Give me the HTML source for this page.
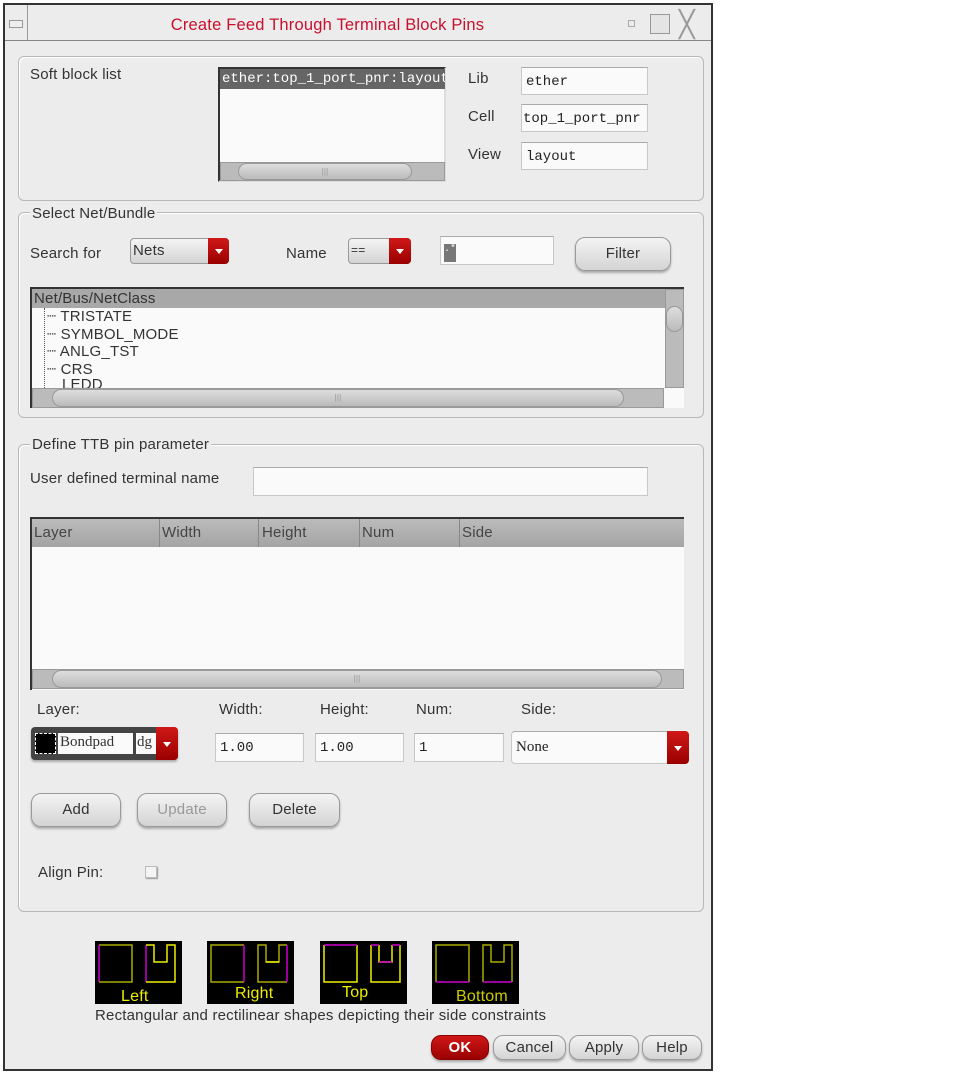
<!DOCTYPE html>
<html><head><meta charset="utf-8"><style>
*{box-sizing:border-box;margin:0;padding:0}
body{width:965px;height:1073px;background:#fff;position:relative;overflow:hidden;font-family:"Liberation Sans",sans-serif;font-size:15px;letter-spacing:0.2px;color:#333}
.a{position:absolute}
.win{left:3px;top:3px;width:710px;height:1068px;background:#ececec;border:2px solid #333}
.grp{border:1px solid #b8b8b8;border-radius:6px;box-shadow:1px 1px 0 #fff inset}
.lt{background:#ececec;padding:0 2px}
.fld{background:#fafafa;border:1px solid #c8c8c8;border-top-color:#aaa;font-family:"Liberation Mono",monospace;font-size:14px;letter-spacing:0;padding:4px 4px;color:#222}
.btn{background:linear-gradient(#f4f4f4,#d4d4d4);border:1px solid #999;border-radius:10px;text-align:center;box-shadow:0 2px 2px #aaa;font-size:15px;color:#333}
.red{background:linear-gradient(#d01818,#9a0000);border-radius:0 4px 4px 0}
.red:after{content:"";position:absolute;left:50%;top:50%;margin:-2px 0 0 -4px;border:4px solid transparent;border-top:5px solid #fff}
.sb{background:#bbb;border:1px solid #999}
.thumb{background:linear-gradient(#ddd,#bbb);border-radius:9px;border:1px solid #999}
</style></head><body>
<div class="a win"></div>
<div class="a" style="left:5px;top:40px;width:706px;height:1px;background:#888"></div>
<div class="a" style="left:27px;top:5px;width:1px;height:35px;background:#999"></div>
<div class="a" style="left:9px;top:20px;width:14px;height:8px;border:1px solid #999;background:#eee"></div>
<div class="a" style="left:0;top:16px;width:655px;text-align:center;color:#c8102e;font-size:16.5px">Create Feed Through Terminal Block Pins</div>
<div class="a" style="left:628px;top:20px;width:7px;height:7px;border:1px solid #aaa"></div>
<div class="a" style="left:650px;top:14px;width:20px;height:20px;border:1px solid #999;background:#e4e4e4"></div>
<div class="a" style="left:679px;top:10px;font-size:26px;color:#999;line-height:28px">╳</div>

<div class="a grp" style="left:18px;top:56px;width:686px;height:145px"></div>
<div class="a" style="left:30px;top:66px">Soft block list</div>
<div class="a" style="left:218px;top:67px;width:228px;height:115px;background:#fafafa;border:2px solid #333;border-right-color:#ddd;border-bottom-color:#ddd"></div>
<div class="a" style="left:220px;top:69px;width:225px;height:20px;background:#666;color:#fff;font-family:'Liberation Mono',monospace;font-size:14px;letter-spacing:0;padding:2px 2px;overflow:hidden;white-space:nowrap">ether:top_1_port_pnr:layout</div>
<div class="a sb" style="left:220px;top:162px;width:225px;height:19px"></div>
<div class="a thumb" style="left:238px;top:163px;width:174px;height:17px;font-size:8px;text-align:center;line-height:15px;color:#999">|||</div>
<div class="a" style="left:468px;top:70px">Lib</div>
<div class="a" style="left:468px;top:108px">Cell</div>
<div class="a" style="left:468px;top:146px">View</div>
<div class="a fld" style="left:521px;top:67px;width:127px;height:28px;padding-top:6px">ether</div>
<div class="a fld" style="left:521px;top:104px;width:127px;height:28px;padding:6px 1px;overflow:hidden;white-space:nowrap">top_1_port_pnr</div>
<div class="a fld" style="left:521px;top:142px;width:127px;height:28px;padding-top:6px">layout</div>

<div class="a grp" style="left:18px;top:212px;width:686px;height:206px"></div>
<div class="a lt" style="left:30px;top:205px">Select Net/Bundle</div>
<div class="a" style="left:30px;top:245px">Search for</div>
<div class="a btn" style="left:130px;top:238px;width:99px;height:26px;border-radius:4px;text-align:left;padding:3px 2px;box-shadow:none">Nets</div>
<div class="a red" style="left:208px;top:238px;width:21px;height:26px"></div>
<div class="a" style="left:286px;top:245px">Name</div>
<div class="a btn" style="left:348px;top:238px;width:63px;height:26px;border-radius:4px;text-align:left;padding:4px 2px;box-shadow:none;font-size:12px">==</div>
<div class="a red" style="left:389px;top:238px;width:22px;height:26px"></div>
<div class="a fld" style="left:440px;top:236px;width:114px;height:29px;padding:3px"><span style="display:inline-block;width:12px;height:18px;background:#777;color:#fff;font-size:10px">.*</span></div>
<div class="a btn" style="left:575px;top:237px;width:96px;height:34px;line-height:32px">Filter</div>

<div class="a" style="left:30px;top:287px;width:654px;height:121px;background:#fafafa;border:2px solid #333;border-right:0;border-bottom:0"></div>
<div class="a" style="left:32px;top:289px;width:633px;height:19px;background:#a8a8a8;padding:0 2px;line-height:19px;color:#333">Net/Bus/NetClass</div>
<div class="a" style="left:32px;top:308px;line-height:17.5px">
<div style="border-left:1px dotted #555;margin-left:12px;height:80px;position:absolute;top:0"></div>
<div style="padding-left:15px">┈ TRISTATE<br>┈ SYMBOL_MODE<br>┈ ANLG_TST<br>┈ CRS</div></div>
<div class="a" style="left:32px;top:378px;width:633px;height:10px;overflow:hidden"><div style="padding-left:30px;line-height:17px;margin-top:-2px">LEDD</div></div>
<div class="a sb" style="left:665px;top:289px;width:19px;height:99px"></div>
<div class="a thumb" style="left:666px;top:306px;width:17px;height:26px"></div>
<div class="a sb" style="left:32px;top:388px;width:632px;height:20px"></div>
<div class="a thumb" style="left:52px;top:389px;width:572px;height:18px;font-size:8px;text-align:center;line-height:16px;color:#999">|||</div>

<div class="a grp" style="left:18px;top:444px;width:686px;height:468px"></div>
<div class="a lt" style="left:30px;top:436px">Define TTB pin parameter</div>
<div class="a" style="left:30px;top:470px">User defined terminal name</div>
<div class="a fld" style="left:253px;top:467px;width:395px;height:29px"></div>

<div class="a" style="left:30px;top:517px;width:654px;height:173px;background:#fafafa;border:2px solid #333;border-right:0;border-bottom:0"></div>
<div class="a" style="left:32px;top:519px;width:652px;height:28px;background:linear-gradient(#bbb,#a4a4a4);color:#444">
<span class="a" style="left:2px;top:5px">Layer</span><span class="a" style="left:130px;top:5px">Width</span><span class="a" style="left:230px;top:5px">Height</span><span class="a" style="left:330px;top:5px">Num</span><span class="a" style="left:430px;top:5px">Side</span>
<span class="a" style="left:127px;top:0;width:1px;height:28px;background:#888"></span><span class="a" style="left:226px;top:0;width:1px;height:28px;background:#888"></span><span class="a" style="left:327px;top:0;width:1px;height:28px;background:#888"></span><span class="a" style="left:427px;top:0;width:1px;height:28px;background:#888"></span></div>
<div class="a sb" style="left:32px;top:669px;width:652px;height:20px"></div>
<div class="a thumb" style="left:52px;top:670px;width:610px;height:18px;font-size:8px;text-align:center;line-height:16px;color:#999">|||</div>

<div class="a" style="left:37px;top:701px">Layer:</div>
<div class="a" style="left:219px;top:701px">Width:</div>
<div class="a" style="left:320px;top:701px">Height:</div>
<div class="a" style="left:416px;top:701px">Num:</div>
<div class="a" style="left:521px;top:701px">Side:</div>
<div class="a" style="left:31px;top:727px;width:147px;height:33px;background:#444;border-radius:4px;box-shadow:0 2px 2px #aaa"></div>
<div class="a" style="left:35px;top:733px;width:21px;height:21px;background:#000;border:1px dashed #fff"></div>
<div class="a" style="left:58px;top:733px;width:75px;height:21px;background:#fafafa;font-family:'Liberation Serif',serif;font-size:15px;letter-spacing:0;padding:1px 2px">Bondpad</div>
<div class="a" style="left:136px;top:733px;width:20px;height:21px;background:#fafafa;font-family:'Liberation Serif',serif;font-size:15px;letter-spacing:0;padding:1px 1px">dg</div>
<div class="a red" style="left:156px;top:727px;width:22px;height:33px"></div>
<div class="a fld" style="left:215px;top:733px;width:89px;height:29px;padding-top:6px">1.00</div>
<div class="a fld" style="left:315px;top:733px;width:89px;height:29px;padding-top:6px">1.00</div>
<div class="a fld" style="left:414px;top:733px;width:90px;height:29px;padding-top:6px">1</div>
<div class="a fld" style="left:511px;top:731px;width:178px;height:33px;border-radius:4px;font-family:'Liberation Serif',serif;font-size:15px;padding-top:7px">None</div>
<div class="a red" style="left:667px;top:731px;width:22px;height:33px"></div>

<div class="a btn" style="left:31px;top:793px;width:90px;height:34px;line-height:32px">Add</div>
<div class="a btn" style="left:137px;top:793px;width:90px;height:34px;line-height:32px;color:#999">Update</div>
<div class="a btn" style="left:249px;top:793px;width:91px;height:34px;line-height:32px">Delete</div>
<div class="a" style="left:38px;top:864px">Align Pin:</div>
<div class="a" style="left:145px;top:866px;width:12px;height:12px;background:#f4f4f4;border:1px solid #bbb;box-shadow:1px 1px 1px #999"></div>

<svg class="a" style="left:95px;top:941px" width="430" height="64" font-family="Liberation Sans" font-size="16">
<g fill="none" stroke-width="1.5">
<g transform="translate(0,0)"><rect width="87" height="63" fill="#000" stroke="none"/>
<path d="M4 4H37V41H4" stroke="#aa0"/><path d="M4 4V41" stroke="#c0c"/>
<path d="M51 4V41" stroke="#c0c"/><path d="M51 4H59V21H72V4H80V41H51" stroke="#ee0"/>
<text x="26" y="60" fill="#ee0" stroke="none">Left</text></g>
<g transform="translate(112,0)"><rect width="87" height="63" fill="#000" stroke="none"/>
<path d="M37 4H4V41H37" stroke="#aa0"/><path d="M37 4V41" stroke="#c0c"/>
<path d="M80 41H51V4H59V21H72V4H80" stroke="#aa0"/><path d="M80 4V41" stroke="#c0c"/><path d="M59 21H72" stroke="#ee0"/>
<text x="28" y="57" fill="#ee0" stroke="none">Right</text></g>
<g transform="translate(225,0)"><rect width="87" height="63" fill="#000" stroke="none"/>
<path d="M4 4V41H37V4" stroke="#ee0"/><path d="M4 4H37" stroke="#c0c"/>
<path d="M51 4V41H80V4" stroke="#ee0"/><path d="M59 4V21H72V4" stroke="#ee0"/><path d="M59 21H72M51 4H59M72 4H80" stroke="#c0c"/>
<text x="22" y="56" fill="#ee0" stroke="none">Top</text></g>
<g transform="translate(337,0)"><rect width="87" height="63" fill="#000" stroke="none"/>
<path d="M4 41V4H37V41" stroke="#aa0"/><path d="M4 41H37" stroke="#c0c"/>
<path d="M51 41V4H59V21H72V4H80V41" stroke="#aa0"/><path d="M51 41H80" stroke="#c0c"/>
<text x="24" y="60" fill="#cc0" stroke="none">Bottom</text></g>
</g></svg>
<div class="a" style="left:95px;top:1007px">Rectangular and rectilinear shapes depicting their side constraints</div>

<div class="a btn" style="left:431px;top:1035px;width:58px;height:25px;line-height:23px;background:linear-gradient(#d01818,#9a0000);color:#fff;font-weight:bold;border-color:#800">OK</div>
<div class="a btn" style="left:493px;top:1035px;width:73px;height:25px;line-height:23px">Cancel</div>
<div class="a btn" style="left:569px;top:1035px;width:70px;height:25px;line-height:23px">Apply</div>
<div class="a btn" style="left:642px;top:1035px;width:60px;height:25px;line-height:23px">Help</div>
</body></html>
